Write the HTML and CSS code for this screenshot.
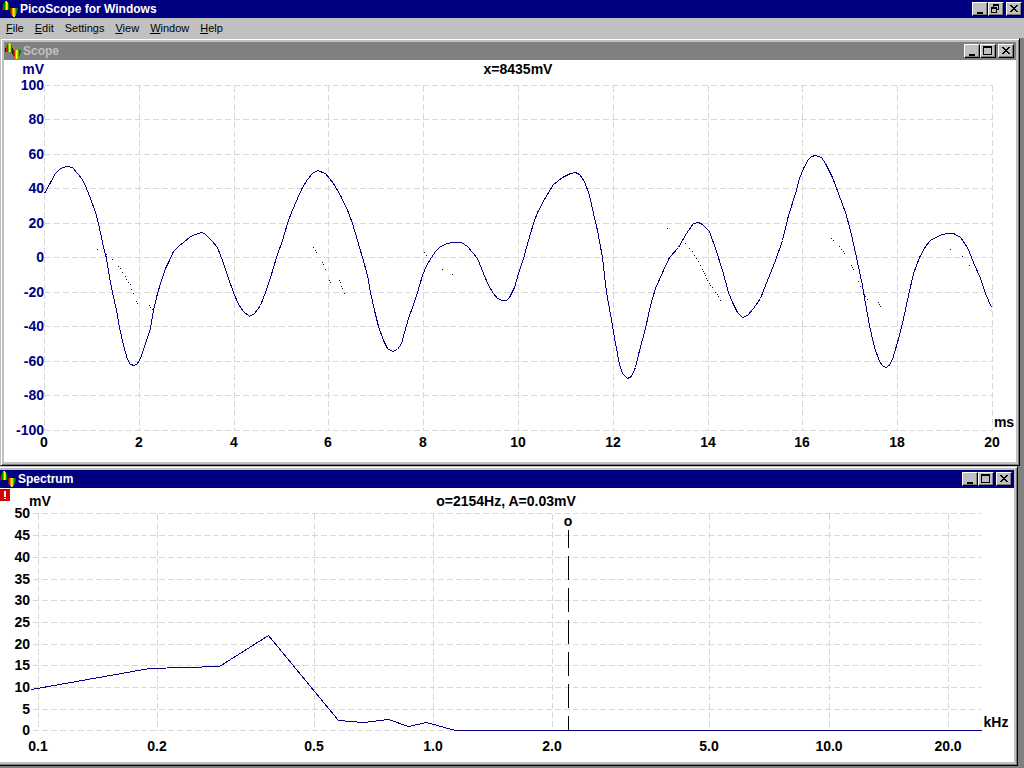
FILE: index.html
```
<!DOCTYPE html>
<html lang="en">
<head>
    <meta charset="UTF-8">
    <meta name="viewport" content="width=device-width, initial-scale=1.0">
    <title>PicoScope for Windows</title>
    <link rel="stylesheet" href="styles.css">
</head>
<body>

    <!-- Shared icons -->
    <svg class="defs" aria-hidden="true">
        <symbol id="logo" viewBox="0 0 16 16">
            <path fill="#600000" d="M0 5h1v4H0z"/>
            <path fill="#d02000" d="M1 3h1v6H1z"/>
            <path fill="#008000" d="M2 1h1v8H2z"/>
            <path fill="#40d000" d="M3 0h1v9H3z"/>
            <path fill="#ffff00" d="M4 0h1v9H4z"/>
            <path fill="#c0e000" d="M5 1h1v8H5z"/>
            <path fill="#008000" d="M6 2h1v7H6z"/>
            <path fill="#003000" d="M7 5h1v6H7z"/>
            <path fill="#802000" d="M8 7h1v6H8z"/>
            <path fill="#e02000" d="M9 7h1v7H9z"/>
            <path fill="#ff9000" d="M10 7h1v8h-1z"/>
            <path fill="#ffff00" d="M11 7h1v9h-1z"/>
            <path fill="#c0e000" d="M12 7h1v9h-1z"/>
            <path fill="#40c000" d="M13 7h1v8h-1z"/>
            <path fill="#008000" d="M14 7h1v6h-1z"/>
            <path fill="#006040" d="M15 7h1v3h-1z"/>
        </symbol>
        <symbol id="minimize" viewBox="0 0 12 10">
            <path d="M3 8h6v2H3z"/>
        </symbol>
        <symbol id="maximize" viewBox="0 0 12 10">
            <path fill-rule="evenodd" d="M1 0h9v9H1zM2 2v6h7V2z"/>
        </symbol>
        <symbol id="restore" viewBox="0 0 12 10">
            <path fill-rule="evenodd" d="M3 0h6v6H7V5h1V2H4v1H3zM1 3h6v6H1zM2 5v3h4V5z"/>
        </symbol>
        <symbol id="close" viewBox="0 0 12 10">
            <path d="M2 1h2v1h1v1h2V2h1V1h2v1H9v1H8v1H7v1h1v1h1v1h1v1H8V7H7V6H5v1H4v1H2V7h1V6h1V5h1V4H4V3H3V2H2z"/>
        </symbol>
    </svg>

    <header class="title-bar app-bar">
        <svg class="logo"><use href="#logo"/></svg>
        <h1>PicoScope for Windows</h1>
        <div class="controls">
            <button aria-label="Minimize"><svg><use href="#minimize"/></svg></button>
            <button aria-label="Restore"><svg><use href="#restore"/></svg></button>
            <button aria-label="Close"><svg><use href="#close"/></svg></button>
        </div>
    </header>

    <nav class="menu">
        <button><u>F</u>ile</button>
        <button><u>E</u>dit</button>
        <button>Settings</button>
        <button><u>V</u>iew</button>
        <button><u>W</u>indow</button>
        <button><u>H</u>elp</button>
    </nav>

    <main>
        <section class="window scope">
            <div class="title-bar inactive">
                <svg class="logo"><use href="#logo"/></svg>
                <h2>Scope</h2>
                <div class="controls">
                    <button aria-label="Minimize"><svg><use href="#minimize"/></svg></button>
                    <button aria-label="Maximize"><svg><use href="#maximize"/></svg></button>
                    <button aria-label="Close"><svg><use href="#close"/></svg></button>
                </div>
            </div>
            <svg class="chart" viewBox="4 60 1012 402">
                <path class="grid" d="M44 85H992M44 119H992M44 154H992M44 188H992M44 223H992M44 257H992M44 292H992M44 326H992M44 361H992M44 395H992M44 430H992
                    M44 85V430M139 85V430M234 85V430M328 85V430M423 85V430M518 85V430M613 85V430M708 85V430M802 85V430M897 85V430M992 85V430"/>

                <g class="volts">
                    <text x="44" y="74">mV</text>
                    <text x="44" y="90">100</text>
                    <text x="44" y="124">80</text>
                    <text x="44" y="159">60</text>
                    <text x="44" y="193">40</text>
                    <text x="44" y="228">20</text>
                    <text x="44" y="262">0</text>
                    <text x="44" y="297">-20</text>
                    <text x="44" y="331">-40</text>
                    <text x="44" y="366">-60</text>
                    <text x="44" y="400">-80</text>
                    <text x="44" y="435">-100</text>
                </g>

                <g class="ticks">
                    <text x="44" y="447">0</text>
                    <text x="139" y="447">2</text>
                    <text x="234" y="447">4</text>
                    <text x="328" y="447">6</text>
                    <text x="423" y="447">8</text>
                    <text x="518" y="447">10</text>
                    <text x="613" y="447">12</text>
                    <text x="708" y="447">14</text>
                    <text x="802" y="447">16</text>
                    <text x="897" y="447">18</text>
                    <text x="992" y="447">20</text>
                    <text x="1004" y="427">ms</text>
                    <text x="518" y="74">x=8435mV</text>
                </g>

                <polyline class="trace" points="44,193 50,182 55,173 60,168 66,166 72,167 77,173 82,179 86,188 90,198 95,212 98,223 102,242 106,258 109,277 112,292 116,310 119,327 123,345 127,359 130,364 134,365 137,363 140,358 145,343 150,328 153,310 157,293 161,280 165,268 169,260 173,251 179,245 183,242 190,236 195,234 201,232 204,233 211,240 217,247 222,260 227,275 233,292 238,304 243,311 249,316 254,313 260,305 265,292 270,277 276,257 282,240 287,223 291,212 297,198 302,187 307,179 312,173 317,170 325,173 333,183 340,195 348,212 352,223 357,240 362,257 367,275 370,292 374,310 378,326 383,340 387,348 392,351 397,349 401,343 404,332 408,318 413,304 417,292 422,275 426,265 431,257 435,251 440,246 447,243 453,242 461,242 467,246 472,252 477,258 483,273 488,285 493,293 497,298 502,300 506,300 509,297 514,287 518,273 523,258 528,240 533,223 537,212 545,197 553,184 562,177 570,173 575,172 579,174 584,181 589,195 593,213 597,230 602,257 606,292 612,325 615,343 619,364 622,373 627,378 631,376 635,367 639,350 645,328 650,305 655,288 663,270 669,257 678,247 686,233 693,223 698,222 702,224 709,231 715,248 722,270 728,292 732,302 737,312 742,317 747,315 753,308 760,298 765,285 775,260 782,240 788,215 795,193 799,178 803,168 808,159 811,156 815,155 821,157 825,163 832,177 838,193 845,212 850,230 856,257 862,285 865,303 869,325 874,347 879,361 882,365 885,367 888,366 892,359 897,342 902,323 908,295 913,273 919,257 925,246 930,240 935,237 942,234 948,233 953,233 960,237 967,247 973,262 980,278 985,293 991,307"/>

                <!-- Stray samples -->
                <path class="samples" d="M97 249h1M106 254h1M112 259h1M118 266h1M120 268h1M122 272h1M125 276h1M126 279h1M128 282h1M130 284h1M131 289h1M133 293h1M136 301h1M137 303h1M149 305h1M150 307h1M152 309h1
                    M313 247h1M315 250h1M316 252h1M322 262h1M323 264h1M325 269h1M329 280h1M330 282h1M339 280h1M340 282h1M341 286h1M342 288h1M344 293h1M424 252h1M426 255h1M442 269h1M452 274h1
                    M667 228h1M685 243h1M689 248h1M692 251h1M694 255h1M696 258h1M698 261h1M700 265h1M702 269h1M703 271h1M704 273h1M705 275h1M706 278h1M707 280h1M709 283h1M710 285h1M712 287h1M715 292h1M717 294h1M718 296h1M720 300h1
                    M831 238h1M833 240h1M839 246h1M841 249h1M843 251h1M844 253h1M851 265h1M852 267h1M853 269h1M858 281h1M860 286h1M864 294h1M865 296h1M867 299h1M878 302h1M879 304h1M880 306h1M950 249h1M962 256h1M969 265h1"/>
            </svg>
        </section>

        <section class="window spectrum">
            <div class="title-bar">
                <svg class="logo"><use href="#logo"/></svg>
                <h2>Spectrum</h2>
                <div class="controls">
                    <button aria-label="Minimize"><svg><use href="#minimize"/></svg></button>
                    <button aria-label="Maximize"><svg><use href="#maximize"/></svg></button>
                    <button aria-label="Close"><svg><use href="#close"/></svg></button>
                </div>
            </div>
            <svg class="chart" viewBox="0 488 1014 274">
                <path class="grid" d="M32 513H980M32 535H980M32 557H980M32 579H980M32 600H980M32 622H980M32 644H980M32 665H980M32 687H980M32 709H980M32 730H980
                    M38 513V730M157 513V730M314 513V730M433 513V730M552 513V730M709 513V730M829 513V730M948 513V730"/>

                <rect class="alert" x="0" y="489" width="10" height="12"/>
                <path class="alert-mark" d="M4 491h2v6H4zM4 498h2v1H4z"/>

                <g class="level">
                    <text x="30" y="518">50</text>
                    <text x="30" y="540">45</text>
                    <text x="30" y="562">40</text>
                    <text x="30" y="584">35</text>
                    <text x="30" y="605">30</text>
                    <text x="30" y="627">25</text>
                    <text x="30" y="649">20</text>
                    <text x="30" y="670">15</text>
                    <text x="30" y="692">10</text>
                    <text x="30" y="714">5</text>
                    <text x="30" y="735">0</text>
                </g>

                <g class="ticks">
                    <text x="40" y="506">mV</text>
                    <text x="38" y="751">0.1</text>
                    <text x="157" y="751">0.2</text>
                    <text x="314" y="751">0.5</text>
                    <text x="433" y="751">1.0</text>
                    <text x="552" y="751">2.0</text>
                    <text x="709" y="751">5.0</text>
                    <text x="829" y="751">10.0</text>
                    <text x="948" y="751">20.0</text>
                    <text x="996" y="727">kHz</text>
                    <text x="506" y="506">o=2154Hz, A=0.03mV</text>
                    <text x="568" y="526">o</text>
                </g>

                <polyline class="trace" points="31,689 149,668 219,666 268,635 338,720 363,722 388,719 408,726 426,722 455,730 981,730"/>
                <path class="marker" d="M568 529V730"/>
            </svg>
        </section>
    </main>

</body>
</html>
```
FILE: styles.css
```
/* General Styles */
* {
    box-sizing: border-box;
}

body {
    margin: 0;
    min-height: 100vh;
    background: #808080;
    font-family: "Liberation Sans", Arial, sans-serif;
    font-size: 12px;
    color: #000;
}

.defs {
    display: none;
}

/* Title bars */
.title-bar {
    display: flex;
    align-items: center;
    height: 18px;
    padding: 0 2px 0 1px;
    background: #000080;
    color: #fff;
}

.app-bar {
    padding-left: 2px;
}

.inactive {
    background: #808080;
    color: #c0c0c0;
}

h1,
h2 {
    flex: 1;
    margin: 0 0 0 2px;
    font-size: 12px;
    line-height: 18px;
    font-weight: bold;
}

.logo {
    width: 16px;
    height: 16px;
    shape-rendering: crispEdges;
}

.controls {
    display: flex;
}

.controls button {
    display: flex;
    width: 16px;
    height: 14px;
    padding: 1px;
    border: 1px solid;
    border-color: #fff #000 #000 #fff;
    border-radius: 0;
    background: #c0c0c0;
    box-shadow: inset -1px -1px #808080;
    color: #000;
}

.controls button:last-child {
    margin-left: 2px;
}

.controls svg {
    width: 12px;
    height: 10px;
    shape-rendering: crispEdges;
}

/* Menu */
.menu {
    display: flex;
    gap: 11px;
    height: 20px;
    padding-left: 6px;
    background: #c0c0c0;
}

.menu button {
    padding: 0;
    border: none;
    background: none;
    font-family: inherit;
    font-size: 11px;
    line-height: 20px;
    color: #000;
}

/* Child windows */
.window {
    padding: 3px;
    border: 1px solid;
    border-color: #c0c0c0 #000 #000 #c0c0c0;
    background: #c0c0c0;
    box-shadow: inset 1px 1px #fff, inset -1px -1px #808080;
}

.scope {
    margin-right: 4px;
}

.spectrum {
    margin-right: 6px;
    padding-left: 0;
    border-left: none;
    box-shadow: inset 0 1px #fff, inset -1px -1px #808080;
}

.spectrum .title-bar {
    padding-left: 0;
}

/* Charts */
.chart {
    display: block;
    width: 100%;
    height: auto;
    background: #fff;
    font-size: 14px;
    font-weight: bold;
    shape-rendering: crispEdges;
}

.grid,
.trace,
.samples,
.marker {
    fill: none;
    stroke-width: 1px;
    transform: translate(0.5px, 0.5px);
}

.grid {
    stroke: #d8d8d8;
    stroke-dasharray: 6 3;
}

.trace {
    stroke: #000080;
}

.samples {
    stroke: #000040;
    transform: translate(0, 0.5px);
}

.marker {
    stroke: #000;
    stroke-dasharray: 24 8;
    stroke-dashoffset: 6px;
}

.volts {
    fill: #000080;
    text-anchor: end;
}

.level {
    text-anchor: end;
}

.ticks {
    text-anchor: middle;
}

.alert {
    fill: #d80000;
}

.alert-mark {
    fill: #fff;
}
```
